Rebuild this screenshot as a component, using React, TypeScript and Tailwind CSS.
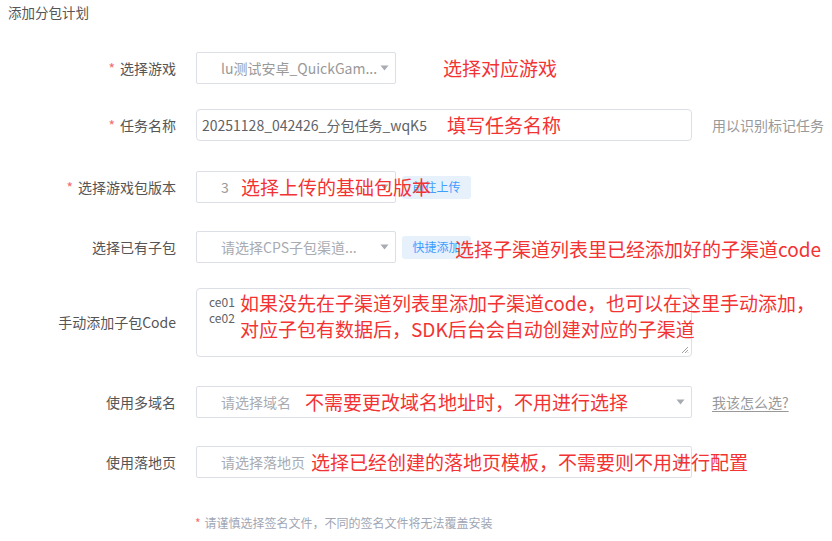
import React from "react";

const FONT = { fontFamily: '"Noto Sans CJK SC", "Noto Sans", sans-serif' };

function Caret() {
  return (
    <svg width="9" height="6" viewBox="0 0 9 6" className="shrink-0">
      <path d="M0.5 0.5 L8.5 0.5 L4.5 5.5 Z" fill="#a8abb2" />
    </svg>
  );
}

function Note({ left, top, children }: { left: number; top: number; children: React.ReactNode }) {
  return (
    <div
      className="absolute whitespace-nowrap text-[19px] leading-[26px] text-[#f33333] pointer-events-none"
      style={{ left, top }}
    >
      {children}
    </div>
  );
}

function Row({
  label,
  required,
  className,
  children,
}: {
  label: string;
  required?: boolean;
  className?: string;
  children: React.ReactNode;
}) {
  return (
    <div className={`relative flex items-center ${className ?? ""}`}>
      <div className="w-[176px] shrink-0 text-right text-[14px] text-[#555]">
        {required && <span className="text-[#f56c6c] mr-[5px]">*</span>}
        {label}
      </div>
      <div className="ml-[20px] flex items-center">{children}</div>
    </div>
  );
}

function Select({ text, placeholder, width }: { text: string; placeholder?: boolean; width: string }) {
  return (
    <div
      className={`${width} h-[32px] flex items-center justify-between border border-[#dcdfe6] rounded-[2px] pl-[24px] pr-[6px] bg-white`}
    >
      <span className={`text-[14px] truncate ${placeholder ? "text-[#a8abb2]" : "text-[#999]"}`}>{text}</span>
      <Caret />
    </div>
  );
}

function TagButton({ children }: { children: React.ReactNode }) {
  return (
    <div className="ml-[6px] h-[23px] w-[69px] flex items-center justify-center rounded-[3px] bg-[#e6f1fc] text-[12px] text-[#409eff]">
      {children}
    </div>
  );
}

export default function App() {
  return (
    <div className="relative w-[832px] h-[541px] bg-white overflow-hidden" style={FONT}>
      <div className="h-[24px] flex items-center pl-[8px] text-[13.5px] text-[#555]">添加分包计划</div>

      <Row label="选择游戏" required className="mt-[28px]">
        <Select text="lu测试安卓_QuickGam..." width="w-[200px]" />
        <Note left={443} top={3}>选择对应游戏</Note>
      </Row>

      <Row label="任务名称" required className="mt-[25px]">
        <div className="w-[496px] h-[32px] flex items-center border border-[#dcdfe6] rounded-[4px] px-[5px] text-[14px] text-[#606266]">
          20251128_042426_分包任务_wqK5
        </div>
        <span className="ml-[20px] text-[14px] text-[#999] whitespace-nowrap">用以识别标记任务</span>
        <Note left={447} top={3}>填写任务名称</Note>
      </Row>

      <Row label="选择游戏包版本" required className="mt-[30px]">
        <Select text="3" width="w-[200px]" />
        <TagButton>前往上传</TagButton>
        <Note left={241} top={3}>选择上传的基础包版本</Note>
      </Row>

      <Row label="选择已有子包" className="mt-[28px]">
        <Select text="请选择CPS子包渠道..." placeholder width="w-[200px]" />
        <TagButton>快捷添加</TagButton>
        <Note left={455} top={5}>选择子渠道列表里已经添加好的子渠道code</Note>
      </Row>

      <Row label="手动添加子包Code" className="mt-[25px]">
        <div className="relative w-[496px] h-[69px] border border-[#dcdfe6] rounded-[4px] pl-[12px] pt-[5px] text-[12px] leading-[16px] text-[#606266]">
          <div>ce01</div>
          <div>ce02</div>
          <svg width="8" height="8" viewBox="0 0 8 8" className="absolute right-[2px] bottom-[2px]">
            <path d="M7 1 L1 7 M7 4 L4 7 M7 6.5 L6.5 7" stroke="#888" strokeWidth="0.8" />
          </svg>
        </div>
        <Note left={240} top={2}>
          <div>如果没先在子渠道列表里添加子渠道code，也可以在这里手动添加，</div>
          <div>对应子包有数据后，SDK后台会自动创建对应的子渠道</div>
        </Note>
      </Row>

      <Row label="使用多域名" className="mt-[29px]">
        <Select text="请选择域名" placeholder width="w-[496px]" />
        <span className="ml-[20px] text-[14px] text-[#999] underline underline-offset-[3px] whitespace-nowrap">我该怎么选?</span>
        <Note left={305} top={3}>不需要更改域名地址时，不用进行选择</Note>
      </Row>

      <Row label="使用落地页" className="mt-[28px]">
        <Select text="请选择落地页" placeholder width="w-[496px]" />
        <Note left={311} top={3}>选择已经创建的落地页模板，不需要则不用进行配置</Note>
      </Row>

      <div className="mt-[37px] pl-[195px] text-[12px] leading-[16px] text-[#a0a6b4]">
        <span className="text-[#f56c6c] mr-[4px]">*</span>请谨慎选择签名文件，不同的签名文件将无法覆盖安装
      </div>
    </div>
  );
}
